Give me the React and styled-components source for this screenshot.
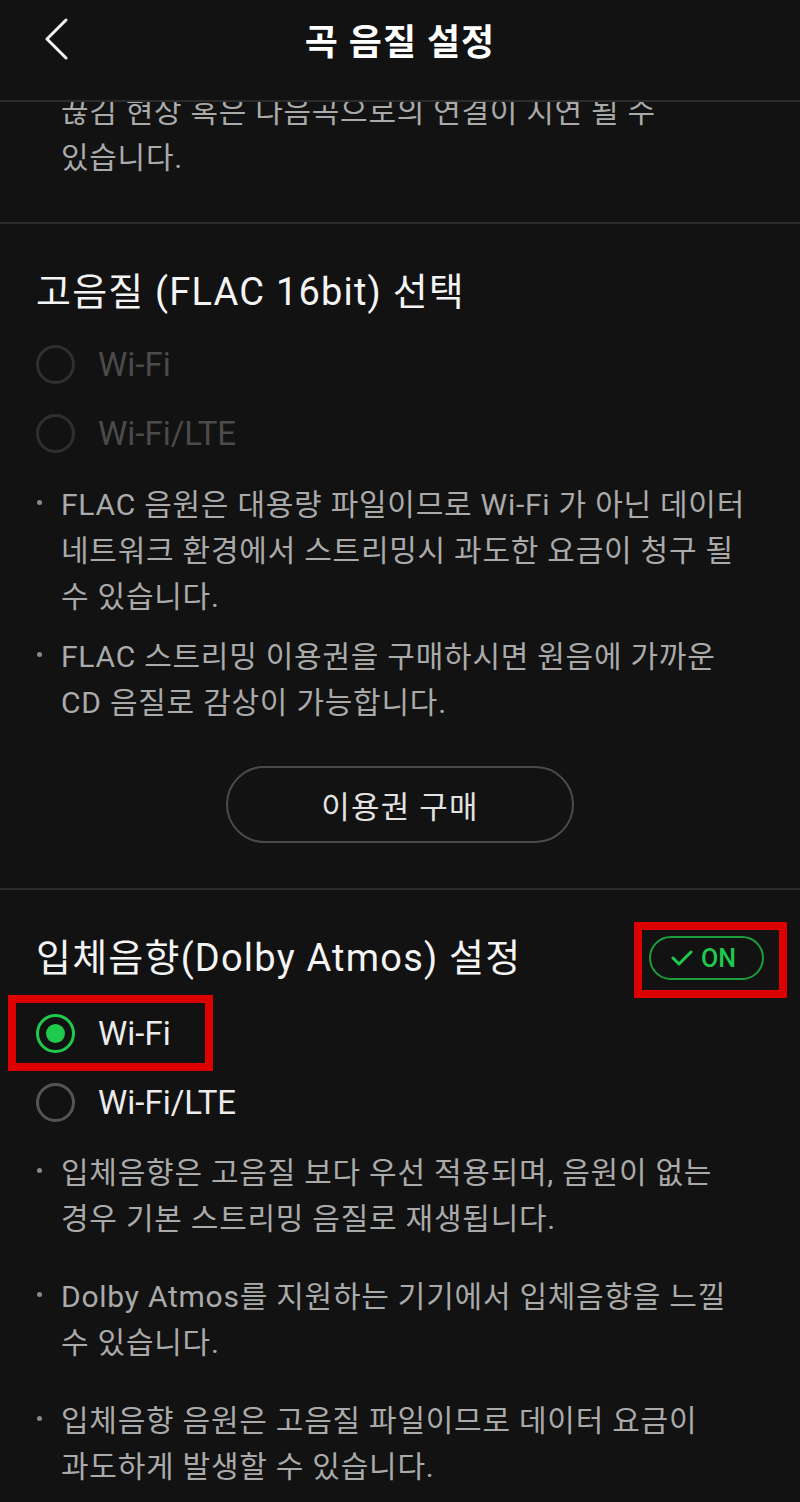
import React from "react";
import styled, { createGlobalStyle } from "styled-components";

const GREEN = "#1fc94c";
const FONT = `"Roboto", "Noto Sans CJK KR", "Noto Sans", sans-serif`;

const Global = createGlobalStyle`
  html, body { margin: 0; padding: 0; background: #121212; }
  body { font-family: ${FONT}; }
  * { box-sizing: border-box; }
`;

const Page = styled.div`
  width: 800px;
  height: 1502px;
  background: #121212;
  display: flex;
  flex-direction: column;
  overflow: hidden;
  font-family: ${FONT};
`;

const Header = styled.header`
  position: relative;
  z-index: 2;
  flex-shrink: 0;
  height: 102px;
  padding-bottom: 22px;
  display: grid;
  grid-template-columns: 1fr auto 1fr;
  align-items: center;
  background: #121212;
  border-bottom: 2px solid #2c2c2c;
`;

const BackButton = styled.button`
  justify-self: start;
  margin-left: 40px;
  width: 32px;
  height: 44px;
  padding: 0;
  border: 0;
  background: transparent;
  display: flex;
  align-items: center;
  justify-content: center;
`;

const Title = styled.h1`
  margin: 0;
  font-size: 36px;
  font-weight: 700;
  color: #ffffff;
  letter-spacing: 1px;
`;

const Viewport = styled.main`
  flex: 1;
  overflow: hidden;
`;

const Scroller = styled.div`
  margin-top: -13px;
`;

const Section = styled.section`
  padding: ${(p) => p.$pad || "44px 36px 45px 36px"};
  border-bottom: 2px solid #2c2c2c;
`;

const PartialText = styled.p`
  margin: 0;
  padding-left: 25px;
  font-size: 30px;
  line-height: 46px;
  letter-spacing: 0.7px;
  color: #aaaaaa;
`;

const TitleRow = styled.div`
  display: flex;
  align-items: center;
  justify-content: space-between;
  height: 48px;
`;

const SectionTitle = styled.h2`
  margin: 0;
  font-size: 38px;
  line-height: 48px;
  font-weight: 400;
  letter-spacing: 1.2px;
  color: #f4f4f4;
`;

const RadioGroup = styled.div`
  margin-top: ${(p) => p.$mt || 14}px;
  display: flex;
  flex-direction: column;
`;

const RadioRow = styled.label`
  position: relative;
  height: 69px;
  display: flex;
  align-items: center;
  gap: 23px;
`;

const RadioCircle = styled.span`
  width: 39px;
  height: 39px;
  border-radius: 50%;
  border: 3px solid
    ${(p) => (p.$checked ? GREEN : p.$disabled ? "#2f2f2f" : "#545454")};
  display: flex;
  align-items: center;
  justify-content: center;
  flex-shrink: 0;
  &::after {
    content: "";
    display: ${(p) => (p.$checked ? "block" : "none")};
    width: 19px;
    height: 19px;
    border-radius: 50%;
    background: ${GREEN};
  }
`;

const RadioLabel = styled.span`
  font-size: 33px;
  color: ${(p) => (p.$disabled ? "#4b4b4b" : "#ececec")};
`;

const Notes = styled.ul`
  margin: ${(p) => p.$mt || 14}px 0 0 0;
  padding: 0;
  list-style: none;
  display: flex;
  flex-direction: column;
  gap: ${(p) => p.$gap || 14}px;
`;

const Note = styled.li`
  display: grid;
  grid-template-columns: 25px 1fr;
  font-size: 30px;
  line-height: 46px;
  letter-spacing: 0.75px;
  color: #aaaaaa;
  white-space: nowrap;
  &::before {
    content: "";
    width: 5px;
    height: 5px;
    border-radius: 50%;
    background: #8a8a8a;
    margin-top: 18px;
    margin-left: 1px;
  }
`;

const ButtonWrap = styled.div`
  display: flex;
  justify-content: center;
  margin-top: 40px;
`;

const PillButton = styled.button`
  width: 348px;
  height: 77px;
  border-radius: 39px;
  border: 2px solid #4a4a4a;
  background: transparent;
  color: #e2e2e2;
  font-family: ${FONT};
  font-size: 31px;
  letter-spacing: 1.2px;
`;

const Toggle = styled.button`
  position: relative;
  width: 115px;
  height: 44px;
  border-radius: 22px;
  border: 2px solid #1a9f3c;
  background: transparent;
  display: flex;
  align-items: center;
  justify-content: center;
  gap: 8px;
  padding: 0 6px 0 0;
  color: ${GREEN};
  font-family: ${FONT};
  font-size: 25px;
  font-weight: 500;
`;

const Highlight = styled.span`
  position: absolute;
  border: 8px solid #dc0000;
  pointer-events: none;
  left: ${(p) => p.$left}px;
  top: ${(p) => p.$top}px;
  width: ${(p) => p.$w}px;
  height: ${(p) => p.$h}px;
`;

const Radio = ({ label, checked, disabled, children }) => (
  <RadioRow>
    <RadioCircle $checked={checked} $disabled={disabled} />
    <RadioLabel $disabled={disabled}>{label}</RadioLabel>
    {children}
  </RadioRow>
);

export default function App() {
  return (
    <Page>
      <Global />
      <Header>
        <BackButton aria-label="back">
          <svg width="26" height="42" viewBox="0 0 26 42" fill="none">
            <polyline
              points="23,2 4,21 23,40"
              stroke="#f2f2f2"
              strokeWidth="3"
              strokeLinecap="round"
              strokeLinejoin="round"
            />
          </svg>
        </BackButton>
        <Title>곡 음질 설정</Title>
        <span />
      </Header>
      <Viewport>
        <Scroller>
          <Section $pad="0 36px 41px 36px">
            <PartialText>
              끊김 현상 혹은 다음곡으로의 연결이 지연 될 수
              <br />
              있습니다.
            </PartialText>
          </Section>

          <Section>
            <SectionTitle>고음질 (FLAC 16bit) 선택</SectionTitle>
            <RadioGroup>
              <Radio label="Wi-Fi" disabled />
              <Radio label="Wi-Fi/LTE" disabled />
            </RadioGroup>
            <Notes>
              <Note>
                <span>
                  FLAC 음원은 대용량 파일이므로 Wi-Fi 가 아닌 데이터
                  <br />
                  네트워크 환경에서 스트리밍시 과도한 요금이 청구 될
                  <br />수 있습니다.
                </span>
              </Note>
              <Note>
                <span>
                  FLAC 스트리밍 이용권을 구매하시면 원음에 가까운
                  <br />
                  CD 음질로 감상이 가능합니다.
                </span>
              </Note>
            </Notes>
            <ButtonWrap>
              <PillButton>이용권 구매</PillButton>
            </ButtonWrap>
          </Section>

          <Section $pad="44px 36px 40px 36px">
            <TitleRow>
              <SectionTitle>입체음향(Dolby Atmos) 설정</SectionTitle>
              <Toggle>
                <svg width="22" height="16" viewBox="0 0 22 16" fill="none">
                  <polyline
                    points="2,8 8,14 20,2"
                    stroke={GREEN}
                    strokeWidth="3"
                    strokeLinecap="round"
                    strokeLinejoin="round"
                  />
                </svg>
                ON
                <Highlight $left={-17} $top={-16} $w={153} $h={76} />
              </Toggle>
            </TitleRow>
            <RadioGroup $mt={17}>
              <Radio label="Wi-Fi" checked>
                <Highlight $left={-28} $top={-4} $w={205} $h={76} />
              </Radio>
              <Radio label="Wi-Fi/LTE" />
            </RadioGroup>
            <Notes $mt={13} $gap={32}>
              <Note>
                <span>
                  입체음향은 고음질 보다 우선 적용되며, 음원이 없는
                  <br />
                  경우 기본 스트리밍 음질로 재생됩니다.
                </span>
              </Note>
              <Note>
                <span>
                  Dolby Atmos를 지원하는 기기에서 입체음향을 느낄
                  <br />수 있습니다.
                </span>
              </Note>
              <Note>
                <span>
                  입체음향 음원은 고음질 파일이므로 데이터 요금이
                  <br />
                  과도하게 발생할 수 있습니다.
                </span>
              </Note>
            </Notes>
          </Section>
        </Scroller>
      </Viewport>
    </Page>
  );
}
